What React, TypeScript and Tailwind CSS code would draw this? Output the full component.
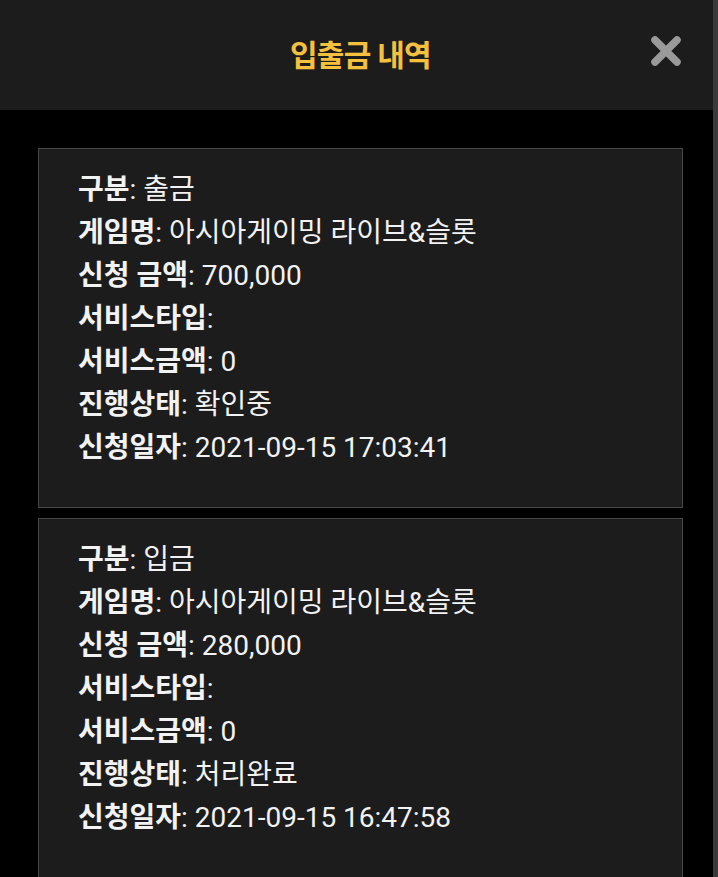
import React from "react";

const records = [
  {
    type: "출금",
    game: "아시아게이밍 라이브&슬롯",
    amount: "700,000",
    serviceType: "",
    serviceAmount: "0",
    status: "확인중",
    date: "2021-09-15 17:03:41",
  },
  {
    type: "입금",
    game: "아시아게이밍 라이브&슬롯",
    amount: "280,000",
    serviceType: "",
    serviceAmount: "0",
    status: "처리완료",
    date: "2021-09-15 16:47:58",
  },
];

function Row({ label, value }: { label: string; value: string }) {
  return (
    <div className="h-[43px] flex items-center whitespace-nowrap">
      <span className="font-bold">{label}</span>
      <span>: {value}</span>
    </div>
  );
}

export default function App() {
  return (
    <div
      className="w-[718px] h-[877px] overflow-hidden flex bg-black"
      style={{ fontFamily: 'Roboto, "Noto Sans CJK KR", sans-serif' }}
    >
      <div className="flex-1 flex flex-col">
        <header className="h-[110px] bg-[#1c1c1c] flex items-center justify-center relative shrink-0">
          <h1 className="text-[30px] font-bold text-[#f4c03e] pl-[8px] tracking-tight">입출금 내역</h1>
          <button className="absolute right-[30px] top-[34px] w-[34px] h-[34px] flex items-center justify-center">
            <svg width="34" height="34" viewBox="0 0 34 34">
              <path d="M6 6 L28 28 M28 6 L6 28" stroke="#9a9a9a" strokeWidth="7.5" strokeLinecap="round" />
            </svg>
          </button>
        </header>
        <main className="flex flex-col gap-[10px] pt-[38px] pl-[38px] pr-[30px]">
          {records.map((r, i) => (
            <div
              key={i}
              className="bg-[#1c1c1c] border border-[#474747] pl-[39px] pt-[19px] pb-[38px] text-[28px] text-[#f2f2f2]"
            >
              <Row label="구분" value={r.type} />
              <Row label="게임명" value={r.game} />
              <Row label="신청 금액" value={r.amount} />
              <Row label="서비스타입" value={r.serviceType} />
              <Row label="서비스금액" value={r.serviceAmount} />
              <Row label="진행상태" value={r.status} />
              <Row label="신청일자" value={r.date} />
            </div>
          ))}
        </main>
      </div>
      <div className="w-[5px] h-full bg-[#3a3a3a] shrink-0" />
    </div>
  );
}
